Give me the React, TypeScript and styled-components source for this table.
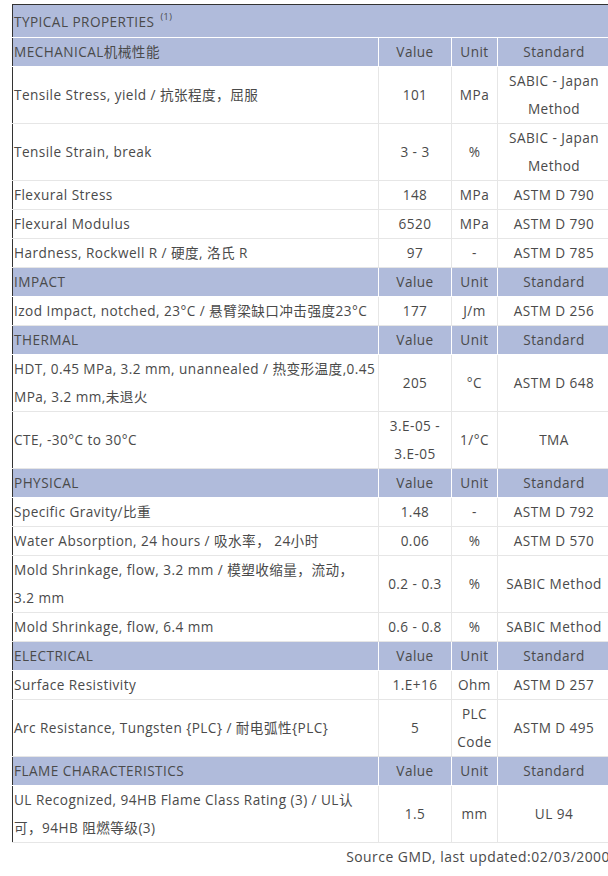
import React from 'react';
import styled, { createGlobalStyle } from 'styled-components';

const GlobalStyle = createGlobalStyle`
  body {
    margin: 0;
    background: #fff;
    font-family: "Open Sans", "Noto Sans CJK SC", sans-serif;
    color: #4a4a4a;
  }
`;

const Page = styled.div`
  width: 598px;
  padding: 4px 0 0 12px;
`;

const Table = styled.table`
  width: 598px;
  border-collapse: collapse;
  border: 1px solid #333;
  font-size: 13.6px;
  letter-spacing: 0.45px;
  line-height: 28px;
  table-layout: fixed;
`;

const Title = styled.td`
  background: #b0bbdb;
  height: 32px;
  padding: 0 0 0 1px;
  vertical-align: middle;
  border-bottom: 1px solid #fff;
  line-height: 31px;

  sup {
    font-size: 9px;
    line-height: 0;
    margin-left: 2px;
    vertical-align: 7px;
  }
`;

const HeadCell = styled.td<{ $left?: boolean }>`
  background: #b0bbdb;
  padding: ${(p) => (p.$left ? '0 0 0 1px' : '0')};
  text-align: ${(p) => (p.$left ? 'left' : 'center')};
  border: 1px solid #fff;
  border-left: ${(p) => (p.$left ? 'none' : '1px solid #fff')};
  height: 28px;
`;

const Cell = styled.td<{ $left?: boolean }>`
  padding: ${(p) => (p.$left ? '0 0 0 1px' : '0 2px')};
  text-align: ${(p) => (p.$left ? 'left' : 'center')};
  vertical-align: middle;
  border: 1px solid #e6e6e6;
  border-left: ${(p) => (p.$left ? 'none' : '1px solid #e6e6e6')};
  height: 28px;
`;

const Source = styled.div`
  text-align: right;
  font-size: 13.9px;
  letter-spacing: 0.5px;
  margin-top: 4px;
  white-space: nowrap;
`;

type Row = [string, string, string, string];
type Section = { name: string; rows: Row[] };

const sections: Section[] = [
  {
    name: 'MECHANICAL机械性能',
    rows: [
      ['Tensile Stress, yield / 抗张程度，屈服', '101', 'MPa', 'SABIC - Japan Method'],
      ['Tensile Strain, break', '3 - 3', '%', 'SABIC - Japan Method'],
      ['Flexural Stress', '148', 'MPa', 'ASTM D 790'],
      ['Flexural Modulus', '6520', 'MPa', 'ASTM D 790'],
      ['Hardness, Rockwell R / 硬度, 洛氏 R', '97', '-', 'ASTM D 785'],
    ],
  },
  {
    name: 'IMPACT',
    rows: [['Izod Impact, notched, 23°C / 悬臂梁缺口冲击强度23°C', '177', 'J/m', 'ASTM D 256']],
  },
  {
    name: 'THERMAL',
    rows: [
      ['HDT, 0.45 MPa, 3.2 mm, unannealed / 热变形温度,0.45 MPa, 3.2 mm,未退火', '205', '°C', 'ASTM D 648'],
      ['CTE, -30°C to 30°C', '3.E-05 - 3.E-05', '1/°C', 'TMA'],
    ],
  },
  {
    name: 'PHYSICAL',
    rows: [
      ['Specific Gravity/比重', '1.48', '-', 'ASTM D 792'],
      ['Water Absorption, 24 hours / 吸水率， 24小时', '0.06', '%', 'ASTM D 570'],
      ['Mold Shrinkage, flow, 3.2 mm / 模塑收缩量，流动，3.2\u00a0mm', '0.2 - 0.3', '%', 'SABIC Method'],
      ['Mold Shrinkage, flow, 6.4 mm', '0.6 - 0.8', '%', 'SABIC Method'],
    ],
  },
  {
    name: 'ELECTRICAL',
    rows: [
      ['Surface Resistivity', '1.E+16', 'Ohm', 'ASTM D 257'],
      ['Arc Resistance, Tungsten {PLC} / 耐电弧性{PLC}', '5', 'PLC Code', 'ASTM D 495'],
    ],
  },
  {
    name: 'FLAME CHARACTERISTICS',
    rows: [['UL Recognized, 94HB Flame Class Rating (3) / UL认可，94HB 阻燃等级(3)', '1.5', 'mm', 'UL 94']],
  },
];

const App: React.FC = () => {
  return (
    <>
      <GlobalStyle />
      <Page>
        <Table>
          <colgroup>
            <col style={{ width: 366 }} />
            <col style={{ width: 73 }} />
            <col style={{ width: 46 }} />
            <col style={{ width: 113 }} />
          </colgroup>
          <tbody>
            <tr>
              <Title colSpan={4}>
                TYPICAL PROPERTIES <sup>(1)</sup>
              </Title>
            </tr>
            {sections.map((s) => (
              <React.Fragment key={s.name}>
                <tr>
                  <HeadCell $left>{s.name}</HeadCell>
                  <HeadCell>Value</HeadCell>
                  <HeadCell>Unit</HeadCell>
                  <HeadCell>Standard</HeadCell>
                </tr>
                {s.rows.map((r) => (
                  <tr key={r[0]}>
                    <Cell $left>{r[0]}</Cell>
                    <Cell>{r[1]}</Cell>
                    <Cell>{r[2]}</Cell>
                    <Cell>{r[3]}</Cell>
                  </tr>
                ))}
              </React.Fragment>
            ))}
          </tbody>
        </Table>
        <Source>Source GMD, last updated:02/03/2000</Source>
      </Page>
    </>
  );
};

export default App;
